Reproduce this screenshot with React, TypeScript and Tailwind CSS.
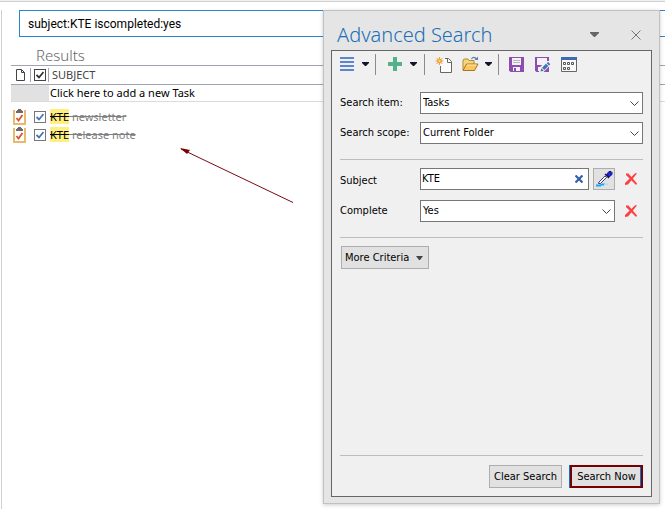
import React, { useState } from 'react';

interface Task {
    id: number;
    match: string;
    rest: string;
}

const tasks: Task[] = [
    { id: 1, match: 'KTE', rest: ' newsletter' },
    { id: 2, match: 'KTE', rest: ' release note' },
];

const Caret = () => (
    <svg width="7" height="4" viewBox="0 0 7 4" className="text-[#14142b]" aria-hidden="true">
        <path d="M0 0h7v1L4 4H3L0 1z" fill="currentColor" />
    </svg>
);

const Separator = () => <div className="w-px h-[21px] bg-[#8c8c8c]" />;

const LinesIcon = () => (
    <svg width="14" height="14" viewBox="0 0 14 14" aria-hidden="true">
        <path d="M0 0h14v2H0zM0 4h14v2H0zM0 8h14v2H0zM0 12h14v2H0z" fill="#5b86d0" />
    </svg>
);

const PlusIcon = () => (
    <svg width="14" height="14" viewBox="0 0 14 14" aria-hidden="true">
        <path d="M5 0h4v5h5v4H9v5H5V9H0V5h5z" fill="#55b08c" />
    </svg>
);

const NewIcon = () => (
    <svg width="17" height="17" viewBox="0 0 17 17" fill="none" aria-hidden="true">
        <path d="M9 2.5h4.500l3 3v11h-11V9" fill="#fbfbfb" />
        <path d="M10 2.500h3.500l3 3v11h-11V10" stroke="#666" />
        <path d="M12.500 2.500v4h4" stroke="#666" />
        <path d="M4.500 1v8M.5 5h8M1.500 2l6 6M7.500 2l-6 6" stroke="#f0a030" />
        <circle cx="4.500" cy="5" r="2.300" fill="#f0a030" />
        <circle cx="4.500" cy="5" r="0.900" fill="#ffe0a8" />
    </svg>
);

const FolderIcon = () => (
    <svg width="17" height="16" viewBox="0 0 17 16" fill="none" aria-hidden="true">
        <path d="M1 14V4l1-1h4l1 1.500h5V8" fill="#f2d57c" stroke="#b88a35" />
        <path d="M1 14.500 4.500 8H16l-3.500 6.500z" fill="#fbc65a" stroke="#a87428" />
        <path d="M5 9h9.500" stroke="#ffe7a8" />
        <path d="M9.500 3C10.500 1 13 .5 14.500 3.500" stroke="#5f80a8" strokeWidth="1.200" />
        <path d="M12.500 4H16V.5z" fill="#5f80a8" />
    </svg>
);

const SaveIcon = () => (
    <svg width="15" height="15" viewBox="0 0 15 15" aria-hidden="true">
        <path d="M0 0h15v15H1.500L0 13.500z" fill="#8c4fb0" />
        <path d="M3 1h9v7H3z" fill="#f4f0f6" />
        <path d="M4 3h7v1H4zM4 5h7v1H4z" fill="#b9b9b9" />
        <path d="M4 10h7v4H4z" fill="#f4f0f6" />
        <path d="M5 11h2v3H5z" fill="#8c4fb0" />
    </svg>
);

const SaveEditIcon = () => (
    <svg width="16" height="15" viewBox="0 0 16 15" aria-hidden="true">
        <path d="M0 0h14v15H1.500L0 13.500z" fill="#8c4fb0" />
        <path d="M2 1h10v7H2z" fill="#f4f0f6" />
        <path d="M3 10h5v4H3z" fill="#f4f0f6" />
        <path d="M4 11h2v3H4z" fill="#8c4fb0" />
        <path d="M4 15v-4l7.500-7H16v3.500L8.500 15z" fill="#f0f0f0" />
        <path d="m5.500 14.500.8-3.200 2.400 2.400zM7 10.700l4-3.900 2.300 2.300-4 3.900zM11.700 6.200l1.400-1.200 2.200 2.300-1.300 1.300z" fill="#3f72b5" />
    </svg>
);

const CalendarIcon = () => (
    <svg width="16" height="15" viewBox="0 0 16 15" fill="none" aria-hidden="true">
        <path d="M.5 2.500h15v12H.5z" fill="#f8f8f8" stroke="#666" />
        <path d="M0 0h16v3H0z" fill="#3f69b0" />
        <path d="M2.500 5.500h2v2h-2zM6.500 5.500h2v2h-2zM10.500 5.500h2v2h-2zM2.500 10.500h2v2h-2zM6.500 10.500h2v2h-2z" stroke="#555" />
    </svg>
);

const DropperIcon = () => (
    <svg width="17" height="16" viewBox="0 0 17 16" fill="none" aria-hidden="true">
        <path d="M0 13.500h4l2-1h3v1h-1v1H5v1H0z" fill="#19a5f5" />
        <path d="M8 12.500h4V14H8z" fill="#a5dcf8" />
        <path d="m2.500 12.500.5-1.500 6-6 1.500 1.500-6 6z" fill="#fff" stroke="#2b2b78" strokeWidth="0.900" />
        <path d="m8.500 3.500 1-1 4 4-1 1z" fill="#14145a" />
        <path d="m10.500 3.500 2.500-3h2l1 1v2L13 6z" fill="#1d24d8" stroke="#14146e" />
    </svg>
);

const ClearIcon = () => (
    <svg width="8" height="8" viewBox="0 0 8 8" fill="none" aria-hidden="true">
        <path d="m.5.500 7 7m0-7-7 7" stroke="#2f62a8" strokeWidth="2.200" />
    </svg>
);

const DeleteIcon = () => (
    <svg width="12" height="12" viewBox="0 0 12 12" fill="none" aria-hidden="true">
        <path d="M1 .5 3.500.500 12 10.500v1h-1.500L1 2z" fill="#fb4141" />
        <path d="M10.500 0 12 .500 3 11.500 0 12v-2z" fill="#fb4141" />
    </svg>
);

const PageIcon = () => (
    <svg width="9" height="12" viewBox="0 0 9 12" fill="none" aria-hidden="true">
        <path d="M.5.500h5l3 3v8h-8zM5.500.500v3h3" stroke="#444" />
    </svg>
);

const ClipboardIcon = () => (
    <svg width="13" height="16" viewBox="0 0 13 16" fill="none" aria-hidden="true">
        <path d="M0 1h13v15H0z" fill="#e9b96e" />
        <path d="M2 3h9v11H2z" fill="#fff" />
        <path d="M2 1h9v3H2z" fill="#fff" />
        <path d="M3 4V2h1V1h1V0h3v1h1v1h1v2z" fill="#6b6b6b" />
        <path d="m3.500 9 2 2.500L9.500 6" stroke="#d9532c" strokeWidth="1.800" />
    </svg>
);

interface TickBoxProps {
    label: string;
    checked: boolean;
    dark?: boolean;
    onChange: () => void;
}

function TickBox({ label, checked, dark, onChange }: TickBoxProps) {
    return (
        <label className="grid size-3 place-items-center">
            <input
                type="checkbox"
                aria-label={label}
                checked={checked}
                onChange={onChange}
                className={`col-start-1 row-start-1 size-3 appearance-none border bg-white ${dark ? 'border-[#444]' : 'border-[#777]'}`}
            />
            {checked && (
                <svg width="8" height="8" viewBox="0 0 8 8" fill="none" className={`pointer-events-none col-start-1 row-start-1 ${dark ? 'text-[#333]' : 'text-[#3f76bd]'}`}>
                    <path d="M.5 4 3 6.500 7.500 1" stroke="currentColor" strokeWidth="1.800" />
                </svg>
            )}
        </label>
    );
}

interface DropDownProps {
    id: string;
    options: string[];
}

function DropDown({ id, options }: DropDownProps) {
    return (
        <div className="grid items-center">
            <select id={id} className="col-start-1 row-start-1 h-[22px] w-full appearance-none border border-[#777] bg-white px-0.5 outline-none">
                {options.map((option) => (
                    <option key={option}>{option}</option>
                ))}
            </select>
            <svg width="9" height="5" viewBox="0 0 9 5" fill="none" className="pointer-events-none col-start-1 row-start-1 mr-1 justify-self-end" aria-hidden="true">
                <path d="m.5.500 4 4 4-4" stroke="#444" />
            </svg>
        </div>
    );
}

function AdvancedSearch() {
    const [subject, setSubject] = useState('KTE');

    return (
        <aside className="absolute top-[10px] right-[5px] bottom-[5px] flex w-[337px] flex-col border border-[#c0c0c0] bg-[#e5e5e5] px-[7px] pb-[6px] shadow-[0_1px_4px_rgba(0,0,0,0.2)]">
            <header className="flex h-[39px] items-center pt-2 pr-[11px] pl-1.5">
                <h2 className="flex-1 font-['Noto_Sans'] text-[20px] leading-6 font-light text-[#1a6fb5]">Advanced Search</h2>
                <button aria-label="Pane options" className="mr-8">
                    <svg width="9" height="5" viewBox="0 0 9 5" aria-hidden="true">
                        <path d="M0 0h9v1L5 5H4L0 1z" fill="#666" />
                    </svg>
                </button>
                <button aria-label="Close">
                    <svg width="10" height="10" viewBox="0 0 10 10" fill="none" aria-hidden="true">
                        <path d="m.5.500 9 9m0-9-9 9" stroke="#777" />
                    </svg>
                </button>
            </header>

            <div className="flex flex-1 flex-col border border-[#666] bg-[#f0f0f0] px-2">
                <div className="flex h-[26px] items-center">
                    <button aria-label="Fields" className="flex items-center gap-2"><LinesIcon /><Caret /></button>
                    <div className="mx-1.5"><Separator /></div>
                    <button aria-label="Add" className="ml-1.5 flex items-center gap-2"><PlusIcon /><Caret /></button>
                    <div className="mr-1.5 ml-[7px]"><Separator /></div>
                    <button aria-label="New search" className="ml-1"><NewIcon /></button>
                    <button aria-label="Open search" className="ml-2.5 flex items-center gap-1.5"><FolderIcon /><Caret /></button>
                    <div className="ml-1.5"><Separator /></div>
                    <button aria-label="Save search" className="ml-2.5"><SaveIcon /></button>
                    <button aria-label="Save search as" className="ml-[11px]"><SaveEditIcon /></button>
                    <button aria-label="Schedule" className="ml-2.5"><CalendarIcon /></button>
                </div>

                <div className="grid grid-cols-[80px_1fr] items-center gap-y-2 pt-[15px] pb-[15px]">
                    <label htmlFor="item">Search item:</label>
                    <DropDown id="item" options={['Tasks', 'Messages', 'Contacts']} />
                    <label htmlFor="scope">Search scope:</label>
                    <DropDown id="scope" options={['Current Folder', 'All Folders']} />
                </div>

                <div className="grid grid-cols-[80px_1fr_28px] items-center gap-y-[10px] border-y border-[#bdbdbd] pt-2 pb-[15px]">
                    <label htmlFor="subject" className="pt-1">Subject</label>
                    <div className="flex gap-1">
                        <div className="flex h-[22px] flex-1 items-center border border-[#777] bg-white pr-[5px]">
                            <input
                                id="subject"
                                value={subject}
                                onChange={(e) => setSubject(e.target.value)}
                                className="w-full min-w-0 px-px outline-none"
                            />
                            <button aria-label="Clear subject" onClick={() => setSubject('')}><ClearIcon /></button>
                        </div>
                        <button aria-label="Pick value" className="grid size-[22px] place-items-center border border-[#adadad] bg-[#e1e1e1]"><DropperIcon /></button>
                    </div>
                    <button aria-label="Remove subject" className="ml-2.5"><DeleteIcon /></button>

                    <label htmlFor="complete">Complete</label>
                    <DropDown id="complete" options={['Yes', 'No']} />
                    <button aria-label="Remove complete" className="ml-2.5"><DeleteIcon /></button>
                </div>

                <button className="mt-2 ml-px flex h-[23px] w-[88px] items-center justify-between border border-[#adadad] bg-[#e1e1e1] pr-1 pl-[3px]">
                    More Criteria
                    <svg width="7" height="4" viewBox="0 0 7 4" className="mr-px" aria-hidden="true">
                        <path d="M0 0h7L4 4H3z" fill="#444" />
                    </svg>
                </button>

                <footer className="mt-auto flex justify-end gap-2 border-t border-[#bdbdbd] pt-[9px] pb-2">
                    <button className="h-[23px] w-[73px] border border-[#adadad] bg-[#e1e1e1]">Clear Search</button>
                    <button className="h-[23px] w-[73px] border-2 border-[#780000] bg-[#e1e1e1] shadow-[-1px_0_0_#0078d7,inset_-1px_0_0_#0078d7]">Search Now</button>
                </footer>
            </div>
        </aside>
    );
}

export default function App() {
    const [query, setQuery] = useState('subject:KTE iscompleted:yes');
    const [done, setDone] = useState<number[]>([1, 2]);
    const allDone = done.length === tasks.length;

    const toggle = (id: number) => {
        setDone(prev => prev.includes(id) ? prev.filter(x => x !== id) : [...prev, id]);
    };

    return (
        <div className="relative flex min-h-screen flex-col bg-white font-['DejaVu_Sans_Condensed','DejaVu_Sans',sans-serif] text-[11px] leading-4 text-black">
            <div className="h-0.5 border-b border-[#d0d0d0] bg-[#f0f0f0]" />
            <main className="mt-2 ml-px flex-1 border-l border-[#d0d0d0]">
                <div className="ml-[17px] border border-r-0 border-[#2a85d0]">
                    <input
                        aria-label="Search tasks"
                        value={query}
                        onChange={(e) => setQuery(e.target.value)}
                        className="block h-[25px] w-full px-2 font-[Roboto,sans-serif] text-[12px] outline-none"
                    />
                </div>
                <h1 className="mt-2 ml-[34px] font-['Noto_Sans'] text-[15px] leading-5 font-light text-[#666]">Results</h1>

                <div className="pl-[9px]">
                    <table className="w-full table-fixed border-collapse text-left font-['Noto_Sans'] text-[11px]">
                        <colgroup>
                            <col className="w-[19px]" />
                            <col className="w-[19px]" />
                            <col />
                        </colgroup>
                        <thead>
                            <tr className="h-[19px] border-y border-[#a0a4b0]">
                                <th className="p-0"><div className="flex justify-center"><PageIcon /></div></th>
                                <th className="p-0">
                                    <div className="flex justify-center border-x border-[#a0a4b0] py-px">
                                        <TickBox dark label="Complete" checked={allDone} onChange={() => setDone(allDone ? [] : tasks.map(t => t.id))} />
                                    </div>
                                </th>
                                <th className="p-0 pl-[3px] font-normal text-[#444]">SUBJECT</th>
                            </tr>
                        </thead>
                        <tbody>
                            <tr className="h-[17px] border-b border-[#dcdcdc]">
                                <td colSpan={2} className="bg-[#e1e1e1] p-0"></td>
                                <td className="p-0 pl-px">Click here to add a new Task</td>
                            </tr>
                            <tr className="h-[6px]"><td colSpan={3} className="p-0"></td></tr>
                            {tasks.map((task) => (
                                <tr key={task.id} className="h-[18px]">
                                    <td className="p-0"><div className="ml-0.5"><ClipboardIcon /></div></td>
                                    <td className="p-0">
                                        <div className="flex justify-center">
                                            <TickBox label={`${task.match}${task.rest}`} checked={done.includes(task.id)} onChange={() => toggle(task.id)} />
                                        </div>
                                    </td>
                                    <td className={`p-0 pl-px leading-3 text-[#808080] ${done.includes(task.id) ? 'line-through' : ''}`}>
                                        <mark className={`bg-[#ffee80] text-black ${done.includes(task.id) ? 'line-through' : ''}`}>{task.match}</mark>{task.rest}
                                    </td>
                                </tr>
                            ))}
                        </tbody>
                    </table>
                </div>
            </main>

            {/* pointer from the pane to the found tasks */}
            <svg width="114" height="56" viewBox="0 0 114 56" fill="none" className="pointer-events-none absolute top-[148px] left-[180px]" aria-hidden="true">
                <path d="M1 1 113 54.500" stroke="#780a14" />
                <path d="M0 0 10 2 7 6z" fill="#780000" />
            </svg>

            <AdvancedSearch />
        </div>
    );
}
